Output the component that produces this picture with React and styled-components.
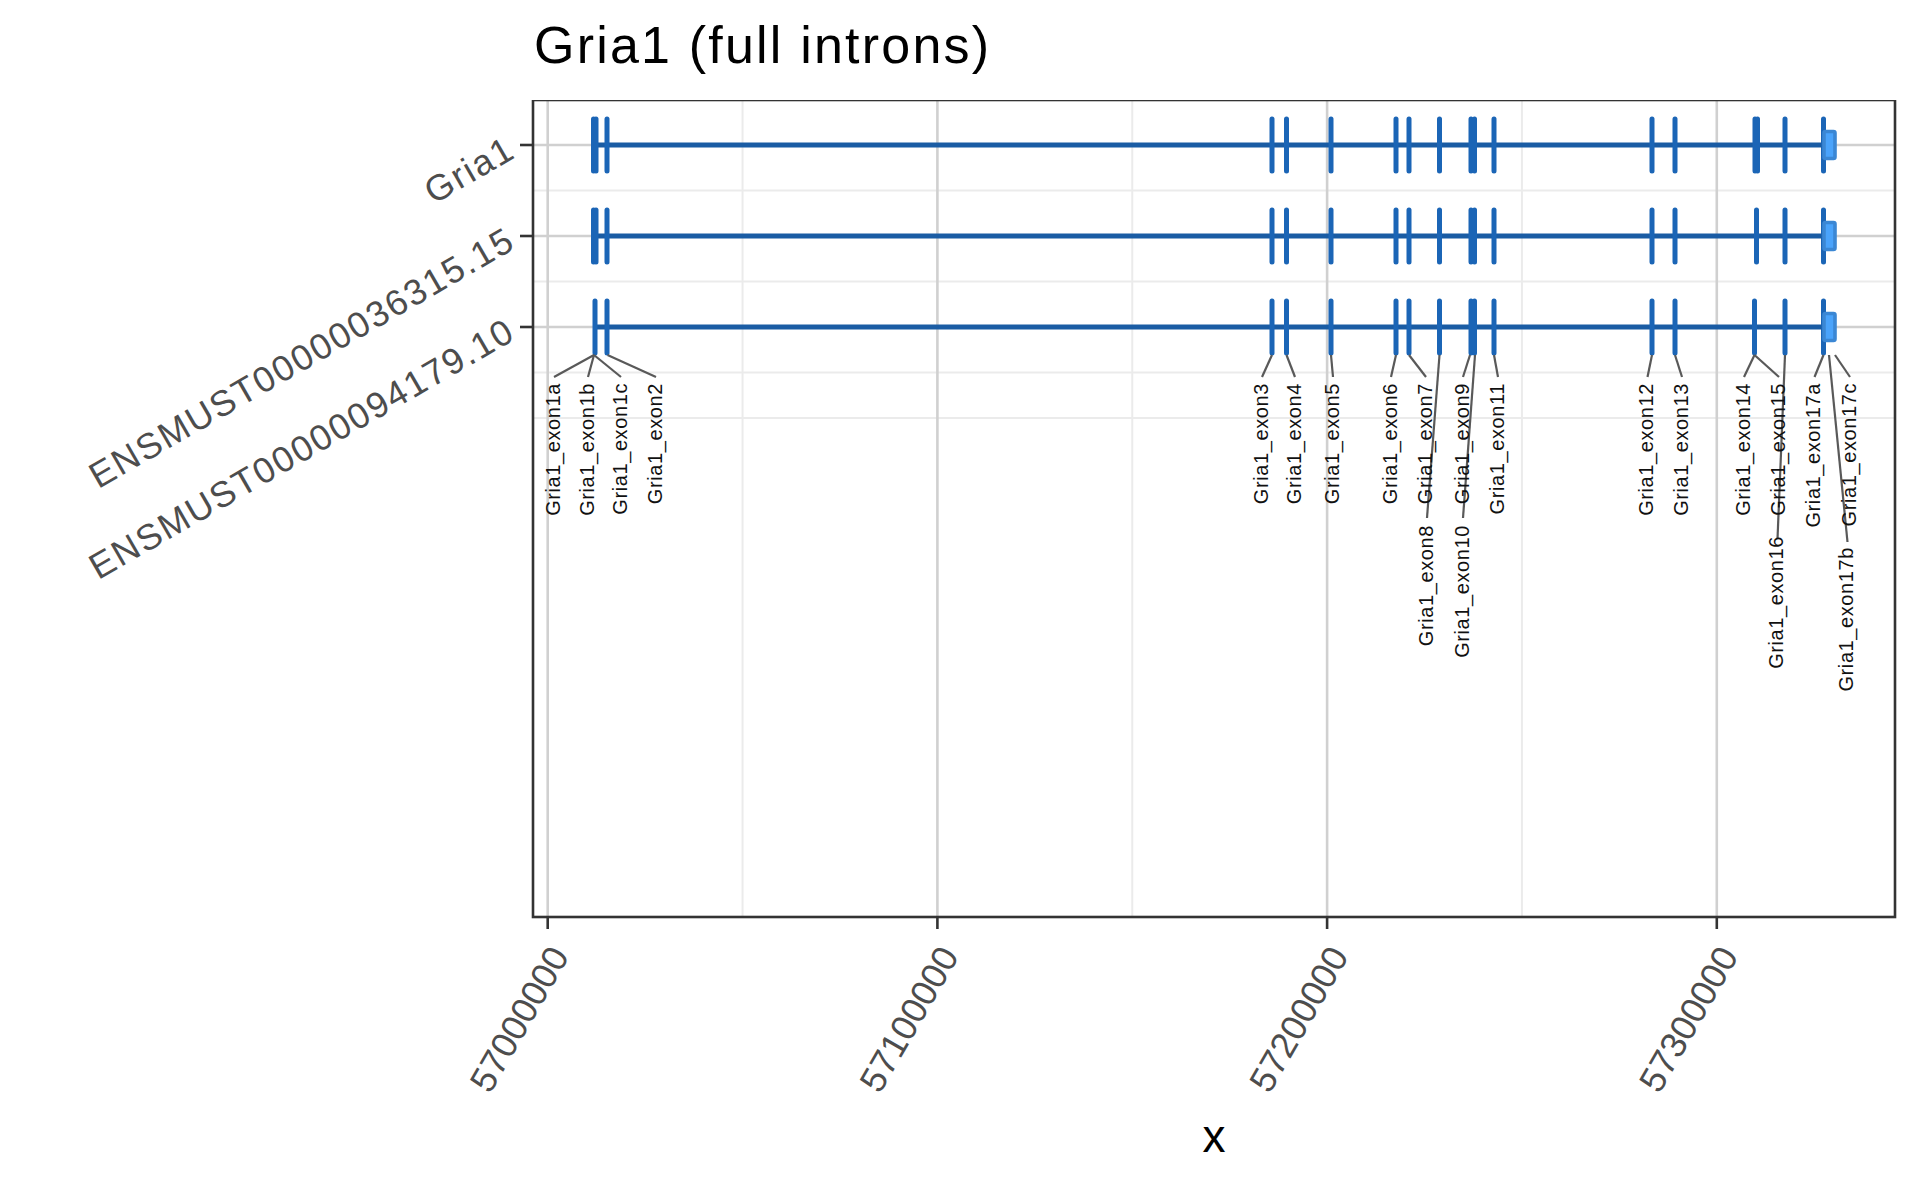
import styled, { createGlobalStyle } from 'styled-components';

const GlobalStyle = createGlobalStyle`
  html, body {
    margin: 0;
    padding: 0;
    background: #ffffff;
  }
`;

const FONT = `"Liberation Sans", Arial, Helvetica, sans-serif`;

// panel geometry in page pixels
const PANEL = { left: 533, top: 100, right: 1895, bottom: 917 };
const X0 = 547.7; // 57000000
const PX_PER_100K = 389.7;
const xPos = (bp) => X0 + ((bp - 57000000) / 100000) * PX_PER_100K;

const ROWS = [
  {
    name: 'Gria1',
    y: 145,
    exons: [593.5, 596, 607, 1272, 1286.5, 1331, 1396, 1409, 1439.5, 1471, 1474.5, 1494, 1652, 1675, 1755, 1757.5, 1785, 1823.5],
  },
  {
    name: 'ENSMUST00000036315.15',
    y: 236,
    exons: [593.5, 596, 607, 1272, 1286.5, 1331, 1396, 1409, 1439.5, 1471, 1474.5, 1494, 1652, 1675, 1756.5, 1785, 1823.5],
  },
  {
    name: 'ENSMUST00000094179.10',
    y: 327,
    exons: [595, 607, 1272, 1286.5, 1331, 1396, 1409, 1439.5, 1471, 1474.5, 1494, 1652, 1675, 1754.5, 1785, 1823.5],
  },
];

const LABELS = [
  { text: 'Gria1_exon1a', ex: 594, lx: 554 },
  { text: 'Gria1_exon1b', ex: 594, lx: 588 },
  { text: 'Gria1_exon1c', ex: 594, lx: 621 },
  { text: 'Gria1_exon2', ex: 607.5, lx: 656 },
  { text: 'Gria1_exon3', ex: 1272, lx: 1262 },
  { text: 'Gria1_exon4', ex: 1286.5, lx: 1295 },
  { text: 'Gria1_exon5', ex: 1331, lx: 1333 },
  { text: 'Gria1_exon6', ex: 1396, lx: 1391 },
  { text: 'Gria1_exon7', ex: 1409, lx: 1426 },
  { text: 'Gria1_exon8', ex: 1439.5, lx: 1427, ly: 518, ty: 525 },
  { text: 'Gria1_exon9', ex: 1470, lx: 1463 },
  { text: 'Gria1_exon10', ex: 1475, lx: 1463, ly: 518, ty: 525 },
  { text: 'Gria1_exon11', ex: 1494, lx: 1498 },
  { text: 'Gria1_exon12', ex: 1652, lx: 1647.5 },
  { text: 'Gria1_exon13', ex: 1675, lx: 1682 },
  { text: 'Gria1_exon14', ex: 1754.5, lx: 1744 },
  { text: 'Gria1_exon15', ex: 1754.5, lx: 1779 },
  { text: 'Gria1_exon16', ex: 1785, lx: 1777.5, ly: 539, ty: 536 },
  { text: 'Gria1_exon17a', ex: 1823.5, lx: 1814.5 },
  { text: 'Gria1_exon17b', ex: 1829, lx: 1847.5, ly: 542, ty: 547 },
  { text: 'Gria1_exon17c', ex: 1835, lx: 1850 },
];

const MAJOR_X = [57000000, 57100000, 57200000, 57300000];
const MINOR_X = [57050000, 57150000, 57250000];
const MINOR_Y = [190.5, 281.5, 372.5, 418];

const Figure = styled.div`
  width: 1920px;
  height: 1186px;
  display: flex;
  flex-direction: column;
  background: #ffffff;
  overflow: hidden;
`;

const Title = styled.h1`
  margin: 0;
  height: 100px;
  box-sizing: border-box;
  padding: 19px 0 0 534px;
  font-family: ${FONT};
  font-size: 52px;
  line-height: 52px;
  font-weight: 400;
  letter-spacing: 2.2px;
  color: #000000;
`;

const Chart = styled.svg`
  display: block;
  width: 1920px;
  height: 1086px;
`;

const GridLine = styled.line`
  stroke: ${(p) => (p.$major ? '#d0d0d0' : '#ebebeb')};
  stroke-width: ${(p) => (p.$major ? 2.6 : 2)};
`;

const PanelBorder = styled.rect`
  fill: none;
  stroke: #333333;
  stroke-width: 2.6;
`;

const Tick = styled.line`
  stroke: #333333;
  stroke-width: 2.6;
`;

const Intron = styled.line`
  stroke: #1a5ca4;
  stroke-width: 5;
`;

const Exon = styled.line`
  stroke: #1b65b6;
  stroke-width: 5;
  stroke-linecap: round;
`;

const UtrBox = styled.rect`
  fill: #4aa3fb;
  stroke: #3b87d4;
  stroke-width: 3.6;
`;

const Leader = styled.line`
  stroke: #595959;
  stroke-width: 2.2;
`;

const AxisText = styled.text`
  font-family: ${FONT};
  font-size: ${(p) => (p.$y ? 36 : 36)}px;
  letter-spacing: ${(p) => (p.$y ? 1.8 : 0)}px;
  fill: #4d4d4d;
`;

const AxisTitle = styled.text`
  font-family: ${FONT};
  font-size: 46px;
  fill: #000000;
`;

const ExonLabel = styled.text`
  font-family: ${FONT};
  font-size: 20px;
  letter-spacing: 0.6px;
  fill: #111111;
`;

const fmt = (v) => String(v);

function Grid() {
  return (
    <g>
      {MINOR_X.map((bp) => (
        <GridLine key={bp} x1={xPos(bp)} x2={xPos(bp)} y1={PANEL.top} y2={PANEL.bottom} />
      ))}
      {MINOR_Y.map((y) => (
        <GridLine key={y} x1={PANEL.left} x2={PANEL.right} y1={y} y2={y} />
      ))}
      {MAJOR_X.map((bp) => (
        <GridLine $major key={bp} x1={xPos(bp)} x2={xPos(bp)} y1={PANEL.top} y2={PANEL.bottom} />
      ))}
      {ROWS.map((r) => (
        <GridLine $major key={r.name} x1={PANEL.left} x2={PANEL.right} y1={r.y} y2={r.y} />
      ))}
    </g>
  );
}

function Transcript({ row }) {
  const last = row.exons[row.exons.length - 1];
  return (
    <g>
      <Intron x1={row.exons[0]} x2={last} y1={row.y} y2={row.y} />
      {row.exons.map((x, i) => (
        <Exon key={i} x1={x} x2={x} y1={row.y - 26} y2={row.y + 26} />
      ))}
      <UtrBox x={1824} y={row.y - 13.5} width={11} height={27} rx={1.5} />
    </g>
  );
}

function Labels() {
  return (
    <g>
      {LABELS.map((l) => (
        <Leader key={l.text} x1={l.ex} y1={355} x2={l.lx} y2={l.ly || 377} />
      ))}
      {LABELS.map((l) => {
        const ty = l.ty || 383;
        return (
          <ExonLabel
            key={l.text}
            x={0}
            y={0}
            dy="0.28em"
            textAnchor="end"
            transform={`translate(${l.lx} ${ty}) rotate(-90)`}
          >
            {l.text}
          </ExonLabel>
        );
      })}
    </g>
  );
}

function Axes() {
  const tickY = PANEL.bottom + 12;
  return (
    <g>
      {ROWS.map((r) => (
        <g key={r.name}>
          <Tick x1={PANEL.left - 13} x2={PANEL.left} y1={r.y} y2={r.y} />
          <AxisText
            $y
            x={511}
            y={r.y}
            dy="0.36em"
            textAnchor="end"
            transform={`rotate(-30 511 ${r.y})`}
          >
            {r.name}
          </AxisText>
        </g>
      ))}
      {MAJOR_X.map((bp) => {
        const x = xPos(bp);
        return (
          <g key={bp}>
            <Tick x1={x} x2={x} y1={PANEL.bottom} y2={tickY} />
            <AxisText
              x={x}
              y={943}
              dy="0.72em"
              textAnchor="end"
              transform={`rotate(-60 ${x} 943)`}
            >
              {fmt(bp)}
            </AxisText>
          </g>
        );
      })}
      <AxisTitle x={1214} y={1152} textAnchor="middle">
        x
      </AxisTitle>
    </g>
  );
}

export default function App() {
  return (
    <Figure>
      <GlobalStyle />
      <Title>Gria1 (full introns)</Title>
      <Chart viewBox="0 100 1920 1086">
        <rect x={PANEL.left} y={PANEL.top} width={PANEL.right - PANEL.left} height={PANEL.bottom - PANEL.top} fill="#ffffff" />
        <Grid />
        {ROWS.map((r) => (
          <Transcript key={r.name} row={r} />
        ))}
        <Labels />
        <PanelBorder x={PANEL.left} y={PANEL.top} width={PANEL.right - PANEL.left} height={PANEL.bottom - PANEL.top} />
        <Axes />
      </Chart>
    </Figure>
  );
}
